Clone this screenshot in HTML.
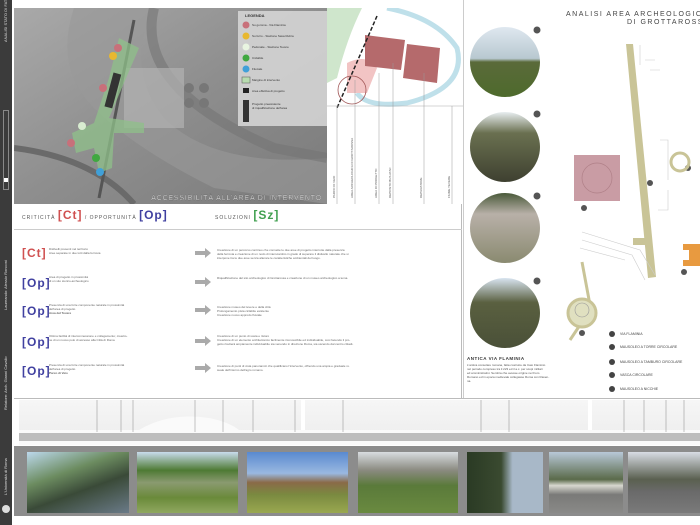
<!DOCTYPE html>
<html><head><meta charset="utf-8"><style>
*{margin:0;padding:0;box-sizing:border-box}
body{width:700px;height:525px;background:#fff;position:relative;overflow:hidden;font-family:"Liberation Sans",sans-serif}
.a{position:absolute}
.vt{writing-mode:vertical-rl;transform:rotate(180deg);color:#ddd;font-size:4px;white-space:nowrap}
.t{font-size:3px;color:#666;line-height:4px;white-space:nowrap}
.big{font-size:12px;font-weight:bold;letter-spacing:1px}
.ph{position:absolute;top:452px;height:61px}
</style></head><body>
<div class="a" style="left:0;top:0;width:12px;height:525px;background:#3b3b3b"></div>
<div class="a vt" style="left:3px;top:2px;height:40px">ANALISI STATO DI FATTO</div>
<div class="a" style="left:3px;top:110px;width:6px;height:80px;border:1px solid #888"></div>
<div class="a" style="left:4px;top:178px;width:4px;height:4px;background:#fff"></div>
<div class="a vt" style="left:3px;top:260px;height:50px">Laureando: Alessio Ronconi</div>
<div class="a vt" style="left:3px;top:360px;height:50px">Relatore: Arch. Gianni Cavallo</div>
<div class="a vt" style="left:3px;top:445px;height:50px">L'Università di Roma</div>
<div class="a" style="left:2px;top:505px;width:8px;height:8px;border-radius:50%;background:#ddd"></div>

<svg class="a" style="left:14px;top:8px" width="313" height="196" viewBox="0 0 313 196">
<defs><linearGradient id="g" x1="0" y1="0" x2="1" y2="1"><stop offset="0" stop-color="#a9a9a9"/><stop offset=".5" stop-color="#8e8e8e"/><stop offset="1" stop-color="#7a7a7a"/></linearGradient></defs>
<rect width="313" height="196" fill="url(#g)"/>
<path d="M60 0 Q40 60 80 100 T 200 180 L313 196 L313 150 Q200 160 150 110 Q110 60 140 0Z" fill="#9a9a9a" opacity=".6"/>
<path d="M0 140 Q80 150 120 196" stroke="#6a6a6a" stroke-width="6" fill="none"/>
<path d="M140 0 Q120 80 260 140 L313 150" stroke="#757575" stroke-width="10" fill="none" opacity=".6"/>
<rect x="110" y="60" width="60" height="60" fill="#b2b2b2" opacity=".7"/>
<circle cx="175" cy="80" r="5" fill="#777"/><circle cx="190" cy="80" r="5" fill="#777"/><circle cx="175" cy="95" r="5" fill="#777"/><circle cx="190" cy="95" r="5" fill="#777"/>
<path d="M120 12 L85 190" stroke="#555" stroke-width="3"/>
<polygon points="105,30 125,40 95,110 130,115 130,125 100,125 98,160 85,165 80,140 62,145 58,125 80,115 95,70" fill="#8fc08a" opacity=".75"/>
<rect x="95" y="65" width="8" height="35" fill="#333" transform="rotate(15 99 82)"/>
<circle cx="104" cy="40" r="4" fill="#c8707a"/><circle cx="99" cy="48" r="4" fill="#e8b830"/><circle cx="89" cy="80" r="4" fill="#c8707a"/><circle cx="68" cy="118" r="4" fill="#d8ecd0"/><circle cx="57" cy="135" r="4" fill="#c8707a"/><circle cx="82" cy="150" r="4" fill="#40a840"/><circle cx="86" cy="164" r="4" fill="#40a0d8"/>
<rect x="224" y="3" width="89" height="115" fill="#d8d8d8" opacity=".85"/>
<text x="231" y="9" font-size="4" font-weight="bold" fill="#333">LEGENDA</text>
<g font-size="3" fill="#333">
<circle cx="232" cy="17" r="3.5" fill="#c8707a"/><text x="238" y="18">Su gomma - Via Flaminia</text>
<circle cx="232" cy="28" r="3.5" fill="#e8b830"/><text x="238" y="29">Su ferro - Stazione Saxa Rubra</text>
<circle cx="232" cy="39" r="3.5" fill="#e8f4e0"/><text x="238" y="40">Pedonale - Stazione Tevere</text>
<circle cx="232" cy="50" r="3.5" fill="#40a840"/><text x="238" y="51">Ciclabile</text>
<circle cx="232" cy="61" r="3.5" fill="#40a0d8"/><text x="238" y="62">Fluviale</text>
<rect x="228" y="69" width="8" height="6" fill="#b8dcb0" stroke="#555" stroke-width=".5"/><text x="238" y="73">Margine di intervento</text>
<text x="238" y="84">Area effettiva di progetto</text><rect x="229" y="80" width="6" height="5" fill="#222"/>
<rect x="229" y="92" width="6" height="22" fill="#333"/><text x="238" y="97">Progetto preesistente</text><text x="238" y="101">di riqualificazione dell'area</text>
</g>
<text x="308" y="192" text-anchor="end" font-size="7" fill="#fff" letter-spacing=".8" stroke="#444" stroke-width=".2">ACCESSIBILITÀ ALL'AREA DI INTERVENTO</text>
</svg>

<svg class="a" style="left:327px;top:8px" width="136" height="196" viewBox="0 0 136 196">
<rect width="136" height="196" fill="#fff"/>
<path d="M0 0 L35 0 Q20 30 10 70 L0 75Z" fill="#cfe6cc"/>
<path d="M60 0 Q110 10 130 40 Q140 80 80 95 Q40 100 30 85" stroke="#bfe0ea" stroke-width="5" fill="none"/>
<path d="M20 55 Q40 45 50 60 L40 85 L20 85Z" fill="#f2c4c4"/>
<polygon points="38,27 78,32 74,62 38,58" fill="#b56a6c"/>
<polygon points="80,36 113,40 110,75 76,70" fill="#b56a6c"/>
<path d="M50 8 L10 100" stroke="#222" stroke-width="1.5" stroke-dasharray="4 2"/>
<circle cx="25" cy="82" r="14" fill="none" stroke="#a05555" stroke-width=".8"/>
<line x1="0" y1="98" x2="136" y2="98" stroke="#aaa" stroke-width=".5"/>
<g stroke="#999" stroke-width=".5">
<line x1="10" y1="98" x2="10" y2="196"/><line x1="28" y1="72" x2="28" y2="196"/><line x1="52" y1="65" x2="52" y2="196"/><line x1="66" y1="55" x2="66" y2="196"/><line x1="97" y1="65" x2="97" y2="196"/><line x1="125" y1="98" x2="125" y2="196"/></g>
<g font-size="3" fill="#555"><text transform="translate(8 190) rotate(-90)">PARCO DI VEIO</text><text transform="translate(26 190) rotate(-90)">AREA ARCHEOLOGICA DI GROTTAROSSA</text><text transform="translate(50 190) rotate(-90)">AREA DI PROGETTO</text><text transform="translate(64 190) rotate(-90)">DEPOSITO BUS ATAC</text><text transform="translate(95 190) rotate(-90)">DEPURATORE</text><text transform="translate(123 190) rotate(-90)">FIUME TEVERE</text></g>
</svg>

<div class="a" style="left:14px;top:204px;width:448px;height:194px;border-right:1px solid #bbb"></div>
<div class="a" style="left:22px;top:208px;font-size:5px;color:#555;letter-spacing:1px">CRITICITÀ <span class="big" style="color:#d05050">[Ct]</span> / OPPORTUNITÀ <span class="big" style="color:#4040a0">[Op]</span></div>
<div class="a" style="left:215px;top:208px;font-size:5px;color:#555;letter-spacing:1px">SOLUZIONI <span class="big" style="color:#40a050">[Sz]</span></div>
<div class="a" style="left:14px;top:229px;width:448px;height:1px;background:#ccc"></div>
<div class="a" style="left:22px;top:244px"><span class="big" style="color:#d05050">[Ct]</span></div>
<div class="a" style="left:22px;top:274px"><span class="big" style="color:#4040a0">[Op]</span></div>
<div class="a" style="left:22px;top:302px"><span class="big" style="color:#4040a0">[Op]</span></div>
<div class="a" style="left:22px;top:333px"><span class="big" style="color:#4040a0">[Op]</span></div>
<div class="a" style="left:22px;top:362px"><span class="big" style="color:#4040a0">[Op]</span></div>
<div class="a t" style="left:49px;top:247px">Dislivelli presenti nel territorio<br>Aree separate in due lotti dalla ferrovia</div>
<div class="a t" style="left:49px;top:275px">Area di progetto in prossimità<br>di un sito storico-archeologico</div>
<div class="a t" style="left:49px;top:303px">Presenza di una forte componente naturale in prossimità<br>dell'area di progetto<br><b>Area del Tevere</b></div>
<div class="a t" style="left:49px;top:334px">Ottima facilità di interconnessione e collegamento; creazio-<br>ne di un nuovo polo di accesso alla Città di Roma</div>
<div class="a t" style="left:49px;top:363px">Presenza di una forte componente naturale in prossimità<br>dell'area di progetto<br><b>Parco di Veio</b></div>
<div class="a t" style="left:217px;top:248px">Creazione di un percorso continuo che connette le due aree di progetto interrotte dalla presenza<br>della ferrovia e creazione di un nodo di interscambio in grado di superare il dislivello naturale che si<br>interpone tra le due aree senza alterare le caratteristiche ambientali del luogo.</div>
<div class="a t" style="left:217px;top:276px">Riqualificazione del sito archeologico di Grottarossa e creazione di un museo archeologico a tema.</div>
<div class="a t" style="left:217px;top:305px">Creazione museo del tevere e della città<br>Prolungamento pista ciclabile esistente<br>Creazione nuovo approdo fluviale</div>
<div class="a t" style="left:217px;top:334px">Creazione di un punto di sosta e ristoro<br>Creazione di un elemento architettonico facilmente riconoscibile ed individuabile, così facendo il pro-<br>getto risulterà ampiamente individuabile sia venendo in direzione Roma, sia uscendo dal centro cittadi-</div>
<div class="a t" style="left:217px;top:364px">Creazione di punti di vista panoramici che qualificano l'intervento, offrendo una ampia e graduale vi-<br>suale dell'intorno dell'agro romano.</div>
<svg class="a" style="left:195px;top:248px" width="16" height="130"><g fill="#aaa"><path d="M0 3h10v-3l6 5-6 5v-3H0z"/><path d="M0 32h10v-3l6 5-6 5v-3H0z"/><path d="M0 60h10v-3l6 5-6 5v-3H0z"/><path d="M0 91h10v-3l6 5-6 5v-3H0z"/><path d="M0 118h10v-3l6 5-6 5v-3H0z"/></g></svg>

<div class="a" style="left:463px;top:0;width:1px;height:398px;background:#ccc"></div>
<div class="a" style="left:566px;top:11px;font-size:7px;color:#444;letter-spacing:1.5px;white-space:nowrap;line-height:8px">ANALISI AREA ARCHEOLOGICO<br><span style="margin-left:61px">DI GROTTAROSSA</span></div>
<svg class="a" style="left:464px;top:0" width="236" height="398" viewBox="464 0 236 398">
<defs>
<linearGradient id="c1" x1="0" y1="0" x2="0" y2="1"><stop offset="0" stop-color="#dfe8f0"/><stop offset=".45" stop-color="#b8c8d0"/><stop offset=".5" stop-color="#5a6a3a"/><stop offset="1" stop-color="#4e6a2c"/></linearGradient>
<linearGradient id="c2" x1="0" y1="0" x2="0" y2="1"><stop offset="0" stop-color="#e8eef0"/><stop offset=".3" stop-color="#6a7050"/><stop offset="1" stop-color="#3e4030"/></linearGradient>
<linearGradient id="c3" x1="0" y1="0" x2="0" y2="1"><stop offset="0" stop-color="#4a5a3a"/><stop offset=".3" stop-color="#b8b0a8"/><stop offset="1" stop-color="#8a8a70"/></linearGradient>
<linearGradient id="c4" x1="0" y1="0" x2="0" y2="1"><stop offset="0" stop-color="#d8e4f0"/><stop offset=".35" stop-color="#5a6040"/><stop offset="1" stop-color="#4a5038"/></linearGradient>
</defs>
<circle cx="505" cy="62" r="35" fill="url(#c1)"/><circle cx="505" cy="147" r="35" fill="url(#c2)"/><circle cx="505" cy="228" r="35" fill="url(#c3)"/><circle cx="505" cy="313" r="35" fill="url(#c4)"/>
<g fill="#555"><circle cx="537" cy="30" r="3.5"/><circle cx="537" cy="114" r="3.5"/><circle cx="537" cy="196" r="3.5"/><circle cx="537" cy="281" r="3.5"/><circle cx="650" cy="183" r="3"/><circle cx="584" cy="208" r="3"/><circle cx="688" cy="168" r="3"/><circle cx="684" cy="272" r="3"/><circle cx="582" cy="333" r="3"/></g>
<polygon points="626,44 633,44 656,277 648,278" fill="#c9c497"/>
<polygon points="633,238 645,238 645,245 633,245" fill="#c9c497"/>
<rect x="574" y="155" width="46" height="46" fill="#c99ca4"/>
<circle cx="597" cy="178" r="15" fill="none" stroke="#b08088" stroke-width=".7"/>
<circle cx="680" cy="162" r="9" fill="none" stroke="#c9c497" stroke-width="3"/>
<path d="M683 244h17v22h-17v-6h6v-10h-6z" fill="#e89a40"/>
<g stroke="#ccc" stroke-width=".6" fill="none"><path d="M582 232 L640 250 L655 275"/><path d="M582 240 L632 255 L645 280"/><path d="M580 248 L625 260"/><path d="M640 45v20M645 60h10M650 70h10"/><path d="M660 140h8v40M668 190v20h-10"/></g>
<g fill="none" stroke="#c9c497" stroke-width="3"><path d="M582 262 L590 305 M582 322 L570 340"/><circle cx="582" cy="313" r="14" fill="#e0e0c0"/></g>
<circle cx="582" cy="310" r="7" fill="none" stroke="#999" stroke-width=".6"/>
<g font-size="3.5" fill="#444"><circle cx="612" cy="334" r="3" fill="#444"/><text x="620" y="335">VIA FLAMINIA</text>
<circle cx="612" cy="347" r="3" fill="#444"/><text x="620" y="348">MAUSOLEO A TORRE CIRCOLARE</text>
<circle cx="612" cy="362" r="3" fill="#444"/><text x="620" y="363">MAUSOLEO A TAMBURO CIRCOLARE</text>
<circle cx="612" cy="375" r="3" fill="#444"/><text x="620" y="376">VASCA CIRCOLARE</text>
<circle cx="612" cy="389" r="3" fill="#444"/><text x="620" y="390">MAUSOLEO A NICCHIE</text></g>
</svg>
<div class="a" style="left:467px;top:356px;font-size:4.5px;color:#333;font-weight:bold;letter-spacing:.5px">ANTICA VIA FLAMINIA</div>
<div class="a t" style="left:467px;top:363px;color:#555">L'antica consolare romana, fatta costruire da Caio Flaminio<br>nel periodo compreso tra il 223 ed il a.c. per scopi militari<br>ed amministrativi. Sembra che avesse origine nel Foro<br>Romano ed in epoca medievale collegasse Roma con Raven-<br>na.</div>

<div class="a" style="left:14px;top:398px;width:686px;height:1px;background:#bbb"></div>
<div class="a" style="left:19px;top:400px;width:282px;height:45px;background:linear-gradient(#f6f6f6,#ececec)"></div>
<div class="a" style="left:305px;top:400px;width:283px;height:45px;background:linear-gradient(#f6f6f6,#ececec)"></div>
<div class="a" style="left:592px;top:400px;width:108px;height:45px;background:linear-gradient(#f6f6f6,#ececec)"></div>
<svg class="a" style="left:19px;top:400px" width="681" height="45"><path d="M0 30 L120 30 Q150 12 190 18 Q210 22 220 30 L681 30 L681 45 L0 45Z" fill="#fafafa"/><rect x="0" y="33" width="681" height="8" fill="#bdbdbd"/><g stroke="#888" stroke-width=".5"><line x1="78" y1="0" x2="78" y2="32"/><line x1="102" y1="0" x2="102" y2="32"/><line x1="114" y1="0" x2="114" y2="32"/><line x1="176" y1="0" x2="176" y2="32"/><line x1="204" y1="0" x2="204" y2="32"/><line x1="234" y1="0" x2="234" y2="32"/><line x1="276" y1="0" x2="276" y2="32"/><line x1="324" y1="0" x2="324" y2="32"/><line x1="462" y1="0" x2="462" y2="32"/><line x1="490" y1="0" x2="490" y2="32"/><line x1="605" y1="0" x2="605" y2="32"/><line x1="625" y1="0" x2="625" y2="32"/><line x1="647" y1="0" x2="647" y2="32"/><line x1="665" y1="0" x2="665" y2="32"/></g></svg>

<div class="a" style="left:14px;top:446px;width:686px;height:70px;background:#8c8c8c"></div>
<div class="ph" style="left:27px;width:102px;background:linear-gradient(160deg,#bcd8ec 0%,#6c8c60 35%,#3a4a38 60%,#6a7a88 100%)"></div>
<div class="ph" style="left:137px;width:101px;background:linear-gradient(#c8dcec 0%,#4e7a34 30%,#8a9a70 50%,#6a8a3a 75%,#90a860 100%)"></div>
<div class="ph" style="left:247px;width:101px;background:linear-gradient(#5a8ad0 0%,#9ab8e0 35%,#8a6a48 50%,#7a8a40 70%,#9aa850 100%)"></div>
<div class="ph" style="left:358px;width:100px;background:linear-gradient(#d8dce0 0%,#8a8a80 30%,#5a7a3a 55%,#6a8a40 100%)"></div>
<div class="ph" style="left:467px;width:76px;background:linear-gradient(90deg,#2a3a24 0%,#3a4a30 45%,#a8b8c8 60%),#888"></div>
<div class="ph" style="left:549px;width:74px;background:linear-gradient(#b8c8d8 0%,#5a6a4a 45%,#d8d8d0 55%,#7a7a78 70%,#8a8a88 100%)"></div>
<div class="ph" style="left:628px;width:72px;background:linear-gradient(#d8dce4 0%,#5a6050 45%,#6a6a6a 65%,#7a7a7a 100%)"></div>
</body></html>
